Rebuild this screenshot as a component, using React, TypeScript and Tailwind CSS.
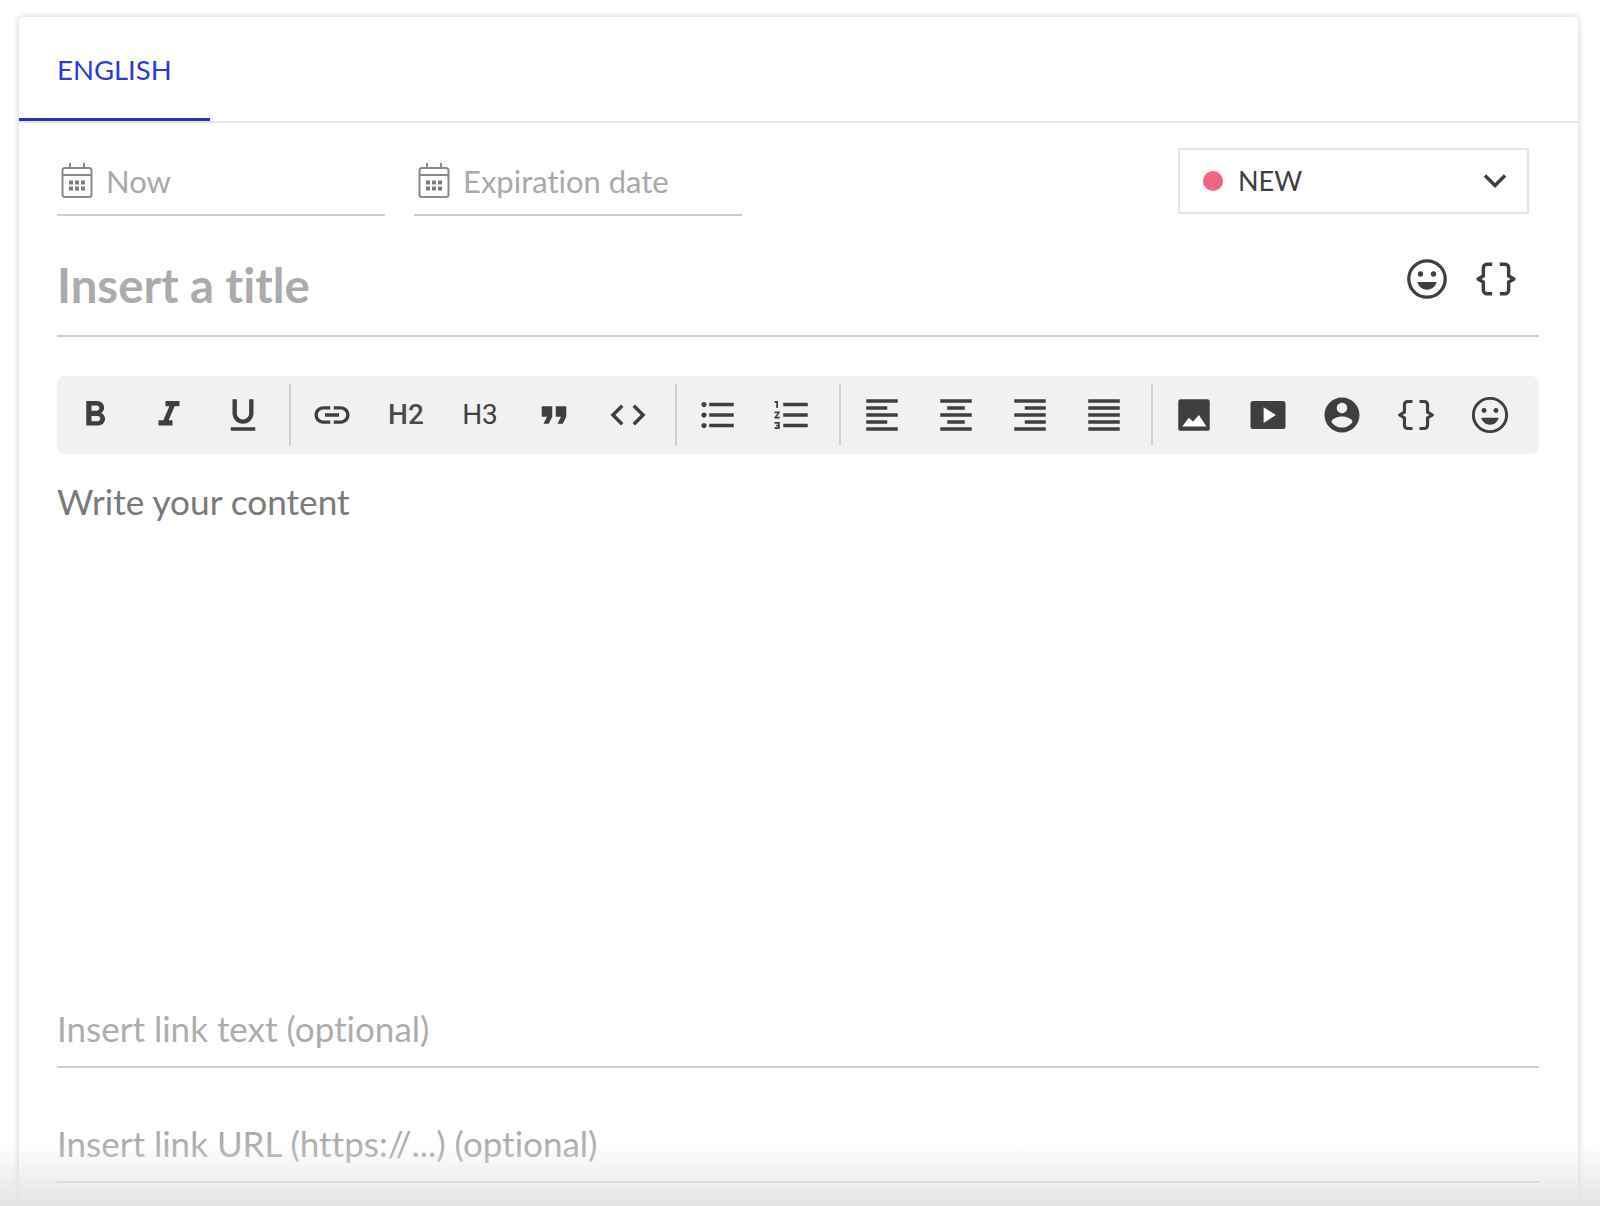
import type { ReactNode } from "react";

const paths = {
  bold: "M15.6 10.79c.97-.67 1.65-1.77 1.65-2.79 0-2.26-1.75-4-4-4H7v14h7.04c2.09 0 3.71-1.7 3.71-3.79 0-1.52-.86-2.82-2.15-3.42zM10 6.5h3c.83 0 1.5.67 1.5 1.5s-.67 1.5-1.5 1.5h-3v-3zm3.5 9H10v-3h3.5c.83 0 1.5.67 1.5 1.5s-.67 1.5-1.5 1.5z",
  italic: "M10 4v3h2.21l-3.42 8H6v3h8v-3h-2.21l3.42-8H18V4z",
  underline: "M12 17c3.31 0 6-2.69 6-6V3h-2.5v8c0 1.93-1.57 3.5-3.5 3.5S8.5 12.93 8.5 11V3H6v8c0 3.31 2.69 6 6 6zm-7 2v2h14v-2H5z",
  link: "M3.9 12c0-1.71 1.39-3.1 3.1-3.1h4V7H7c-2.76 0-5 2.24-5 5s2.24 5 5 5h4v-1.9H7c-1.71 0-3.1-1.39-3.1-3.1zM8 13h8v-2H8v2zm9-6h-4v1.9h4c1.71 0 3.1 1.39 3.1 3.1s-1.39 3.1-3.1 3.1h-4V17h4c2.76 0 5-2.24 5-5s-2.24-5-5-5z",
  quote: "M6 17h3l2-4V7H5v6h3zm8 0h3l2-4V7h-6v6h3z",
  code: "M9.4 16.6L4.8 12l4.6-4.6L8 6l-6 6 6 6 1.4-1.4zm5.2 0l4.6-4.6-4.6-4.6L16 6l6 6-6 6-1.4-1.4z",
  ul: "M4 10.5c-.83 0-1.5.67-1.5 1.5s.67 1.5 1.5 1.5 1.5-.67 1.5-1.5-.67-1.5-1.5-1.5zm0-6c-.83 0-1.5.67-1.5 1.5S3.17 7.5 4 7.5 5.5 6.83 5.5 6 4.83 4.5 4 4.5zm0 12c-.83 0-1.5.68-1.5 1.5s.68 1.5 1.5 1.5 1.5-.68 1.5-1.5-.67-1.5-1.5-1.5zM7 19h14v-2H7v2zm0-6h14v-2H7v2zm0-8v2h14V5H7z",
  ol: "M2 17h2v.5H3v1h1v.5H2v1h3v-4H2v1zm1-9h1V4H2v1h1v3zm-1 3h1.8L2 13.1v.9h3v-1H3.2L5 10.9V10H2v1zm5-6v2h14V5H7zm0 14h14v-2H7v2zm0-6h14v-2H7v2z",
  left: "M15 15H3v2h12v-2zm0-8H3v2h12V7zM3 13h18v-2H3v2zm0 8h18v-2H3v2zM3 3v2h18V3H3z",
  center: "M7 15v2h10v-2H7zm-4 6h18v-2H3v2zm0-8h18v-2H3v2zm4-6v2h10V7H7zM3 3v2h18V3H3z",
  right: "M3 21h18v-2H3v2zm6-4h12v-2H9v2zm-6-4h18v-2H3v2zm6-4h12V7H9v2zM3 3v2h18V3H3z",
  justify: "M3 21h18v-2H3v2zm0-4h18v-2H3v2zm0-4h18v-2H3v2zm0-4h18V7H3v2zm0-6v2h18V3H3z",
  person: "M12 2C6.48 2 2 6.48 2 12s4.48 10 10 10 10-4.48 10-10S17.52 2 12 2zm0 3c1.66 0 3 1.34 3 3s-1.34 3-3 3-3-1.34-3-3 1.34-3 3-3zm0 14.2c-2.5 0-4.71-1.28-6-3.22.03-1.99 4-3.08 6-3.08 1.99 0 5.97 1.09 6 3.08-1.29 1.94-3.5 3.22-6 3.22z",
};

function Icon({ d, size = 42 }: { d: string; size?: number }) {
  return (
    <svg width={size} height={size} viewBox="0 0 24 24" fill="#3f3f3f">
      <path d={d} />
    </svg>
  );
}

function ImageIcon() {
  return (
    <svg width={42} height={42} viewBox="0 0 24 24">
      <rect x="3" y="3" width="18" height="18" rx="1.5" fill="#3f3f3f" />
      <path d="M5.3 18.6L9 13.5l2.5 2.2 3.3-3.7 4.3 6.6z" fill="#fff" />
    </svg>
  );
}

function VideoIcon() {
  return (
    <svg width={42} height={42} viewBox="0 0 24 24">
      <rect x="2" y="4" width="20" height="16" rx="1.5" fill="#3f3f3f" />
      <path d="M9.5 7.5l7 4.5-7 4.5z" fill="#fff" />
    </svg>
  );
}

function Smile({ size = 42 }: { size?: number }) {
  return (
    <svg width={size} height={size} viewBox="0 0 24 24" fill="#3f3f3f">
      <circle cx="12" cy="12" r="9.5" fill="none" stroke="#3f3f3f" strokeWidth="1.7" />
      <circle cx="8.6" cy="9.4" r="1.4" />
      <circle cx="15.4" cy="9.4" r="1.4" />
      <path d="M7 13.6h10c-.6 2.4-2.6 4-5 4s-4.400-1.600-5-4z" />
    </svg>
  );
}

function Braces({ size = 42 }: { size?: number }) {
  return (
    <svg width={size} height={size} viewBox="0 0 24 24" fill="none" stroke="#3f3f3f" strokeWidth="1.8" strokeLinejoin="round">
      <path d="M10 4.300H7.300C6.200 4.300 5.400 5.100 5.400 6.200V10.400L2.600 12L5.400 13.600V17.800C5.400 18.900 6.200 19.700 7.300 19.700H10" />
      <path d="M14 4.300H16.700C17.800 4.300 18.600 5.100 18.600 6.200V10.400L21.400 12L18.600 13.600V17.800C18.600 18.900 17.800 19.700 16.700 19.700H14" />
    </svg>
  );
}

function CalendarIcon() {
  return (
    <svg width={32} height={36} viewBox="0 0 32 36" fill="none" stroke="#8a8a8a" strokeWidth="2">
      <rect x="1.500" y="5" width="29" height="29" rx="2.500" />
      <path d="M1.500 12h29M9 0v5M23 0v5" />
      <g fill="#7c7c7c" stroke="none">
        <rect x="8" y="17.500" width="4" height="4" />
        <rect x="14" y="17.500" width="4" height="4" />
        <rect x="20" y="17.500" width="4" height="4" />
        <rect x="8" y="23.500" width="4" height="4" />
        <rect x="14" y="23.500" width="4" height="4" />
        <rect x="20" y="23.500" width="4" height="4" />
      </g>
    </svg>
  );
}

function Tool({ children }: { children: ReactNode }) {
  return <div className="flex h-full w-[74px] items-center justify-center">{children}</div>;
}

function Sep({ wide }: { wide?: boolean }) {
  return <div className={`${wide ? "ml-[10px]" : "ml-[9px]"} mr-[4px] h-[62px] w-[2px] bg-[#d0d0d0]`} />;
}

function DateField({ label }: { label: string }) {
  return (
    <div className="flex h-[68px] w-[328px] items-center gap-[13px] border-b-2 border-[#cfcfcf] pl-1">
      <CalendarIcon />
      <span className="text-[31px] text-[#a9a9a9]">{label}</span>
    </div>
  );
}

function LinkField({ label, height }: { label: string; height: string }) {
  return (
    <div className={`flex items-end border-b-2 border-[#cfcfcf] pb-[16px] ${height}`}>
      <span className="text-[35px] leading-[44px] text-[#adadad]">{label}</span>
    </div>
  );
}

export default function App() {
  return (
    <div className="relative h-[1206px] overflow-hidden bg-white pl-[19px] pt-[17px] font-[Lato,sans-serif] [font-variant-ligatures:none]">
      <div className="h-[1300px] w-[1559px] rounded-t bg-white shadow-[0_0_7px_rgba(0,0,0,0.2)]">
        <div className="border-b-2 border-[#e5e5e5]">
          <div className="flex h-[104px] w-[191px] items-center border-b-[3px] border-[#2233cc] pl-[38px] pt-[5px] text-[27.5px] text-[#2b3bd8]">
            ENGLISH
          </div>
        </div>

        <div className="pl-[38px] pr-[39px]">
          <div className="flex items-start justify-between pr-[10px] pt-[25px]">
            <div className="flex gap-[29px]">
              <DateField label="Now" />
              <DateField label="Expiration date" />
            </div>
            <div className="flex h-[66px] w-[351px] items-center border-2 border-[#e5e5e5] pl-[23px] pr-[20px]">
              <span className="h-5 w-5 rounded-full bg-[#f0657f]" />
              <span className="ml-[15px] flex-1 text-[27px] text-[#3f3f3f]">NEW</span>
              <svg width={24} height={16} viewBox="0 0 24 16" fill="none" stroke="#3f3f3f" strokeWidth="3.500">
                <path d="M2 2.500l10 10 10-10" />
              </svg>
            </div>
          </div>

          <div className="flex h-[121px] items-start justify-between border-b-2 border-[#cfcfcf]">
            <div className="mt-[41px] text-[47.3px] leading-[56px] font-bold text-[#ababab]">Insert a title</div>
            <div className="mr-[20px] mt-[40px] flex gap-[23px]">
              <Smile size={46} />
              <Braces size={46} />
            </div>
          </div>

          <div className="mt-[39px] flex h-[78px] items-center rounded-lg bg-[#f1f1f1] pl-px">
            <Tool><Icon d={paths.bold} /></Tool>
            <Tool><Icon d={paths.italic} /></Tool>
            <Tool><Icon d={paths.underline} /></Tool>
            <Sep />
            <Tool><Icon d={paths.link} /></Tool>
            <Tool><span className="font-[Roboto,sans-serif] text-[28px] font-medium text-[#4a4a4a]">H2</span></Tool>
            <Tool><span className="font-[Roboto,sans-serif] text-[28px] text-[#3f3f3f]">H3</span></Tool>
            <Tool><Icon d={paths.quote} /></Tool>
            <Tool><Icon d={paths.code} /></Tool>
            <Sep wide />
            <Tool><Icon d={paths.ul} /></Tool>
            <Tool><Icon d={paths.ol} /></Tool>
            <Sep wide />
            <Tool><Icon d={paths.left} /></Tool>
            <Tool><Icon d={paths.center} /></Tool>
            <Tool><Icon d={paths.right} /></Tool>
            <Tool><Icon d={paths.justify} /></Tool>
            <Sep wide />
            <Tool><ImageIcon /></Tool>
            <Tool><VideoIcon /></Tool>
            <Tool><Icon d={paths.person} /></Tool>
            <Tool><Braces /></Tool>
            <Tool><Smile /></Tool>
          </div>

          <div className="h-[514px] pt-[25px] text-[35.2px] leading-[44px] text-[#7a7a7a]">Write your content</div>

          <LinkField label="Insert link text (optional)" height="h-[100px]" />
          <LinkField label="Insert link URL (https://...) (optional)" height="h-[115px]" />
        </div>
      </div>
      <div className="pointer-events-none absolute inset-x-0 bottom-0 h-[64px] bg-linear-to-b from-white/0 to-[#e4e4e4]" />
    </div>
  );
}
